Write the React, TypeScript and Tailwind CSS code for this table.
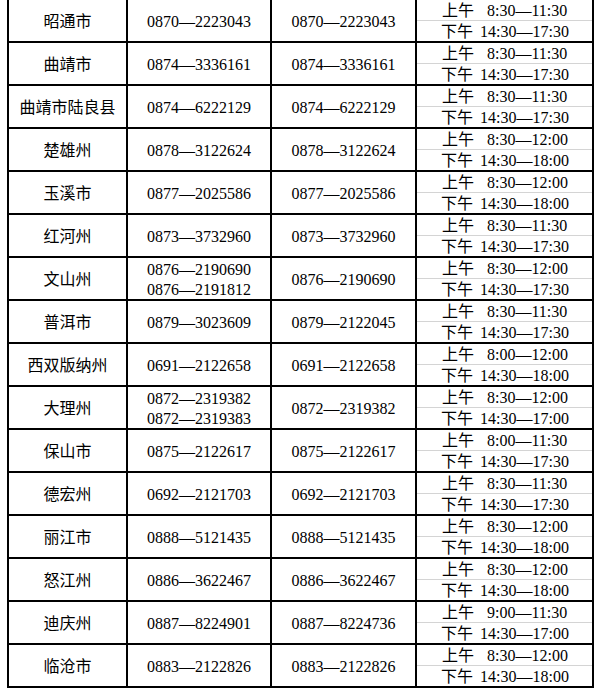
import React from "react";

type Row = {
  city: string;
  phones: string[];
  fax: string;
  am: string;
  pm: string;
};

const rows: Row[] = [
  { city: "昭通市", phones: ["0870—2223043"], fax: "0870—2223043", am: "8:30—11:30", pm: "14:30—17:30" },
  { city: "曲靖市", phones: ["0874—3336161"], fax: "0874—3336161", am: "8:30—11:30", pm: "14:30—17:30" },
  { city: "曲靖市陆良县", phones: ["0874—6222129"], fax: "0874—6222129", am: "8:30—11:30", pm: "14:30—17:30" },
  { city: "楚雄州", phones: ["0878—3122624"], fax: "0878—3122624", am: "8:30—12:00", pm: "14:30—18:00" },
  { city: "玉溪市", phones: ["0877—2025586"], fax: "0877—2025586", am: "8:30—12:00", pm: "14:30—18:00" },
  { city: "红河州", phones: ["0873—3732960"], fax: "0873—3732960", am: "8:30—11:30", pm: "14:30—17:30" },
  { city: "文山州", phones: ["0876—2190690", "0876—2191812"], fax: "0876—2190690", am: "8:30—12:00", pm: "14:30—17:30" },
  { city: "普洱市", phones: ["0879—3023609"], fax: "0879—2122045", am: "8:30—11:30", pm: "14:30—17:30" },
  { city: "西双版纳州", phones: ["0691—2122658"], fax: "0691—2122658", am: "8:00—12:00", pm: "14:30—18:00" },
  { city: "大理州", phones: ["0872—2319382", "0872—2319383"], fax: "0872—2319382", am: "8:30—12:00", pm: "14:30—17:00" },
  { city: "保山市", phones: ["0875—2122617"], fax: "0875—2122617", am: "8:00—11:30", pm: "14:30—17:30" },
  { city: "德宏州", phones: ["0692—2121703"], fax: "0692—2121703", am: "8:30—11:30", pm: "14:30—17:30" },
  { city: "丽江市", phones: ["0888—5121435"], fax: "0888—5121435", am: "8:30—12:00", pm: "14:30—18:00" },
  { city: "怒江州", phones: ["0886—3622467"], fax: "0886—3622467", am: "8:30—12:00", pm: "14:30—18:00" },
  { city: "迪庆州", phones: ["0887—8224901"], fax: "0887—8224736", am: "9:00—11:30", pm: "14:30—17:00" },
  { city: "临沧市", phones: ["0883—2122826"], fax: "0883—2122826", am: "8:30—12:00", pm: "14:30—18:00" },
];

const App = () => {
  return (
    <div className="w-[599px] h-[688px] overflow-hidden bg-white text-black font-['Liberation_Serif','Noto_Sans_CJK_SC',serif] text-[16px] leading-[20px]">
      <div className="ml-[7px] -mt-[2px] w-[587px] border-x-2 border-t-2 border-black">
        {rows.map((r) => (
          <div key={r.city} className="flex h-[43px] border-b-2 border-black">
            <div className="w-[119px] pt-[2px] flex items-center justify-center border-r-2 border-black">
              {r.city}
            </div>
            <div className="w-[144px] pt-[2px] flex flex-col items-center justify-center border-r-2 border-black">
              {r.phones.map((p) => (
                <div key={p} className={r.phones.length > 1 ? "h-[20px] leading-[20px]" : ""}>
                  {p}
                </div>
              ))}
            </div>
            <div className="w-[145px] pt-[2px] flex items-center justify-center border-r-2 border-black">
              {r.fax}
            </div>
            <div className="flex-1 flex flex-col">
              <div className="h-[21px] pt-[2px] flex items-center pl-[25px] border-b border-[#d4d4d4]">
                <span className="w-[32px]">上午</span>
                <span className="ml-[13px]">{r.am}</span>
              </div>
              <div className="h-[20px] pt-[2px] flex items-center pl-[24px]">
                <span className="w-[32px]">下午</span>
                <span className="ml-[7px]">{r.pm}</span>
              </div>
            </div>
          </div>
        ))}
      </div>
    </div>
  );
};

export default App;
